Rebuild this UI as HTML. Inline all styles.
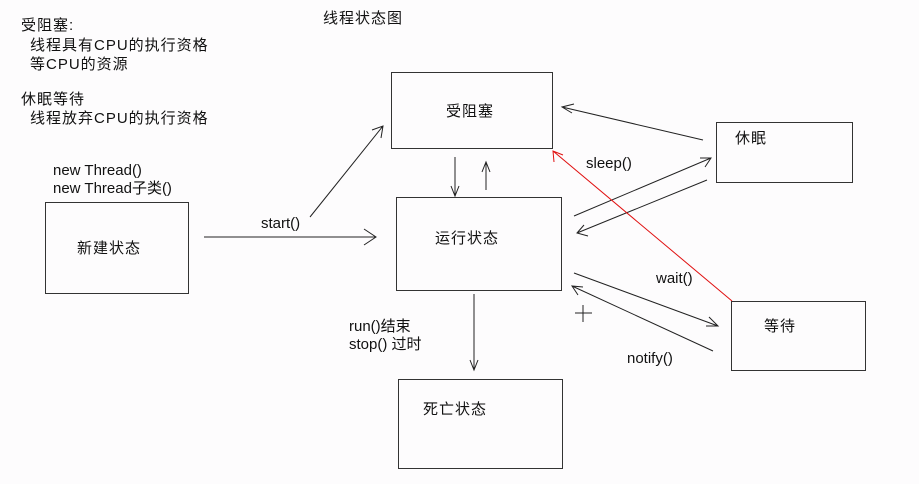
<!DOCTYPE html>
<html><head><meta charset="utf-8"><style>
html,body{margin:0;padding:0;background:#fdfcfd;}
body{width:919px;height:484px;position:relative;overflow:hidden;font-family:"Liberation Sans","Noto Sans CJK SC",sans-serif;font-size:15px;color:#111;}
.t{position:absolute;white-space:nowrap;line-height:18px;}
.c{letter-spacing:1px;}
.b{position:absolute;border:1.5px solid #333;box-sizing:border-box;}
svg{position:absolute;left:0;top:0;}
</style></head><body>
<div class="t c" style="left:21px;top:17px">受阻塞:</div>
<div class="t c" style="left:30px;top:37px">线程具有CPU的执行资格</div>
<div class="t c" style="left:30px;top:56px">等CPU的资源</div>
<div class="t c" style="left:21px;top:91px">休眠等待</div>
<div class="t c" style="left:30px;top:110px">线程放弃CPU的执行资格</div>
<div class="t c" style="left:323px;top:10px">线程状态图</div>
<div class="t" style="left:53px;top:162px">new Thread()</div>
<div class="t" style="left:53px;top:180px">new Thread子类()</div>
<div class="t" style="left:261px;top:215px">start()</div>
<div class="t" style="left:586px;top:155px">sleep()</div>
<div class="t" style="left:656px;top:270px">wait()</div>
<div class="t" style="left:627px;top:350px">notify()</div>
<div class="t" style="left:349px;top:318px">run()结束</div>
<div class="t" style="left:349px;top:336px">stop() 过时</div>

<div class="b" style="left:45px;top:202px;width:144px;height:92px"></div>
<div class="t c" style="left:77px;top:240px">新建状态</div>
<div class="b" style="left:391px;top:72px;width:162px;height:77px"></div>
<div class="t c" style="left:446px;top:103px">受阻塞</div>
<div class="b" style="left:396px;top:197px;width:166px;height:94px"></div>
<div class="t c" style="left:435px;top:230px">运行状态</div>
<div class="b" style="left:716px;top:122px;width:137px;height:61px"></div>
<div class="t c" style="left:735px;top:130px">休眠</div>
<div class="b" style="left:731px;top:301px;width:135px;height:70px"></div>
<div class="t c" style="left:764px;top:318px">等待</div>
<div class="b" style="left:398px;top:379px;width:165px;height:90px"></div>
<div class="t c" style="left:423px;top:401px">死亡状态</div>

<svg width="919" height="484" fill="none" stroke="#222" stroke-width="1">
<path d="M204 237H376M364 229L376 237L364 245"/>
<path d="M310 217L383 126M372 130L383 126L381 138"/>
<path d="M455 157V196M451 186L455 196L459 186"/>
<path d="M486 190V162M482 172L486 162L490 172"/>
<path d="M474 294V370M470 360L474 370L478 360"/>
<path d="M703 140L562 107M574 104L562 107L572 113"/>
<path d="M574 216L711 158M700 158L711 158L705 167"/>
<path d="M707 180L577 233M584 225L577 233L588 236"/>
<path d="M574 273L718 326M709 317L718 326L706 326"/>
<path d="M713 351L572 286M578 295L572 286L583 287"/>
<path d="M553 151L732 301M554 162L553 151L563 155" stroke="#e01010"/>
<path d="M583 305V322M575 313H592"/>
</svg>
</body></html>
